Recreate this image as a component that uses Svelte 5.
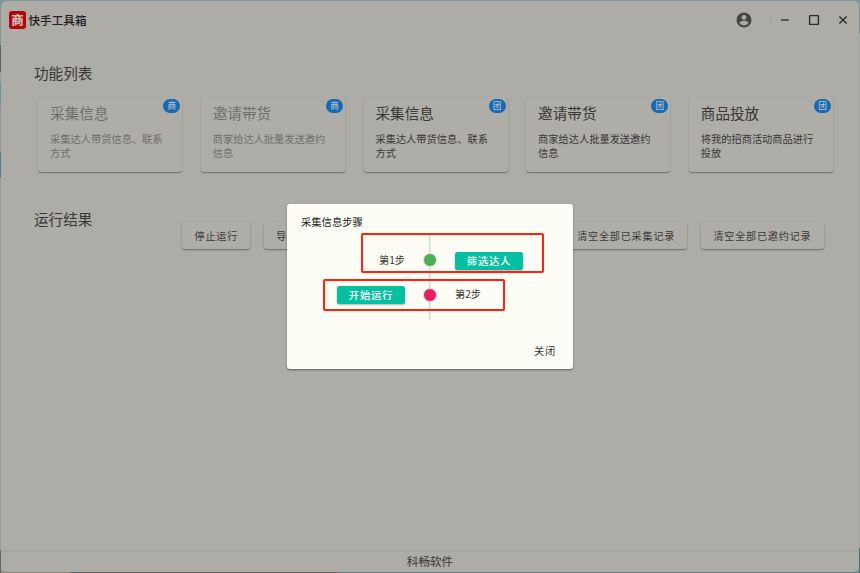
<script lang="ts">
	interface Feature {
		title: string
		desc: string
		tag: string
		disabled?: boolean
	}

	const features: Array<Feature> = [
		{ title: '采集信息', desc: '采集达人带货信息、联系方式', tag: '商', disabled: true },
		{ title: '邀请带货', desc: '商家给达人批量发送邀约信息', tag: '商', disabled: true },
		{ title: '采集信息', desc: '采集达人带货信息、联系方式', tag: '团' },
		{ title: '邀请带货', desc: '商家给达人批量发送邀约信息', tag: '团' },
		{ title: '商品投放', desc: '将我的招商活动商品进行投放', tag: '团' }
	]
</script>

<div class="desktop">
	<div class="window">
		<header>
			<span class="logo">商</span>
			<span class="name">快手工具箱</span>
			<svg class="account" viewBox="0 0 24 24">
				<path
					fill-rule="evenodd"
					d="M12 2a10 10 0 1 0 0 20 10 10 0 0 0 0-20Zm0 3.2a3.3 3.3 0 1 1 0 6.6 3.3 3.3 0 0 1 0-6.6Zm0 14.2a7.2 7.2 0 0 1-6-3.3c0-2 4-3 6-3s6 1 6 3a7.2 7.2 0 0 1-6 3.3Z"
				/>
			</svg>
			<span class="divider"></span>
			<svg class="control" viewBox="0 0 12 12"><path d="M2.2 6h7.6" /></svg>
			<svg class="control" viewBox="0 0 12 12"><rect x="1.6" y="1.6" width="8.8" height="8.8" rx="0.5" /></svg>
			<svg class="control" viewBox="0 0 12 12"><path d="M2.4 2.4l7.2 7.2M9.6 2.4l-7.2 7.2" /></svg>
		</header>

		<main>
			<h2>功能列表</h2>
			<div class="cards">
				{#each features as feature}
					<div class="card" class:disabled={feature.disabled}>
						<span class="tag">{feature.tag}</span>
						<h3>{feature.title}</h3>
						<p>{feature.desc}</p>
					</div>
				{/each}
			</div>

			<section class="results">
				<h2>运行结果</h2>
				<div class="actions">
					<button class="stop">停止运行</button>
					<button class="export">导出</button>
					<button class="clear">清空全部已采集记录</button>
					<button class="clear">清空全部已邀约记录</button>
				</div>
			</section>
		</main>

		<footer>科畅软件</footer>
	</div>

	<div class="dialog">
		<h4>采集信息步骤</h4>
		<div class="timeline">
			<div class="step first">
				<span class="side before">第1步</span>
				<i class="dot green"></i>
				<span class="side"><button class="primary">筛选达人</button></span>
				<div class="mark"></div>
			</div>
			<div class="step second">
				<span class="side before"><button class="primary">开始运行</button></span>
				<i class="dot pink"></i>
				<span class="side">第2步</span>
				<div class="mark"></div>
			</div>
		</div>
		<button class="close">关闭</button>
	</div>
</div>

<style>
	:global(body) {
		margin: 0;
	}

	.desktop,
	.desktop * {
		box-sizing: border-box;
	}

	.desktop {
		position: relative;
		width: 860px;
		height: 573px;
		padding: 1px;
		overflow: hidden;
		font-family: 'Noto Sans CJK SC', sans-serif;
		color: #373735;
		background:
			linear-gradient(#7f9499 0 45px, #66605f 45px 72px, #9aa09f 72px 82px, #6594a0 82px 106px, #9b9696 106px 152px, #567e91 152px 178px, #9a9b98 178px 550px, #656762 550px) left / 1px 100% no-repeat,
			linear-gradient(#7197a1 0 34px, #a5a8a4 34px 548px, #39777c 548px) right / 1px 100% no-repeat,
			linear-gradient(90deg, #8c8771 0 70px, #66696c 70px 340px, #5d7e7e 340px) bottom / 100% 1px no-repeat,
			#7e989d;
	}

	.window {
		display: flex;
		flex-direction: column;
		height: 571px;
		border-radius: 5px;
		background: #adaca6;
	}

	header {
		display: flex;
		align-items: center;
		height: 38px;
		padding: 0 10px 0 8px;
	}

	.logo {
		width: 17px;
		height: 18px;
		border-radius: 3px;
		background: #b3060c;
		color: #cbb9b4;
		font-size: 12.5px;
		font-weight: 900;
		line-height: 17px;
		text-align: center;
	}

	.name {
		margin: -1px 0 0 2.5px;
		font-size: 11.6px;
		font-weight: 500;
		color: #20201f;
	}

	.account {
		width: 18px;
		height: 18px;
		margin-left: auto;
		fill: #454543;
	}

	.divider {
		width: 1px;
		height: 12px;
		margin: 0 8px 0 17px;
		background: #a09f9a;
	}

	.control {
		width: 12px;
		height: 12px;
		margin-right: 17px;
		fill: none;
		stroke: #2d2d2b;
		stroke-width: 1.4;
	}

	.control:last-child {
		margin-right: 0;
	}

	main {
		flex: 1;
		padding: 24px 26px 0 33px;
	}

	h2,
	h3,
	h4,
	p {
		margin: 0;
		font-weight: 400;
	}

	h2 {
		font-size: 14.6px;
		line-height: 20px;
	}

	.cards {
		display: flex;
		gap: 18.7px;
		margin: 14px 0 0 4.3px;
	}

	.card {
		position: relative;
		flex: 1;
		height: 75px;
		padding: 6px 12px 0 11.8px;
		border-radius: 3px;
		background: #aeada7;
		box-shadow:
			0 1px 1px rgba(0, 0, 0, 0.24),
			0 1px 2px rgba(0, 0, 0, 0.14);
	}

	.card h3 {
		font-size: 14.6px;
		line-height: 20px;
	}

	.card p {
		width: 116px;
		margin-top: 8.5px;
		font-size: 10.22px;
		line-height: 14.4px;
	}

	.disabled {
		color: #6f6e6b;
	}

	.tag {
		position: absolute;
		top: 2px;
		right: 2px;
		width: 17px;
		height: 14px;
		border-radius: 7px;
		background: #1669b2;
		color: #b3bfc6;
		font-size: 8.6px;
		font-weight: 500;
		line-height: 13px;
		text-align: center;
	}

	.results {
		display: flex;
		align-items: flex-start;
		margin-top: 37px;
	}

	.actions {
		display: flex;
		gap: 13.7px;
		width: 641.5px;
		margin: 13px 9.5px 0 auto;
	}

	button {
		border: 0;
		padding: 0;
		font: inherit;
		color: inherit;
		white-space: nowrap;
	}

	.actions button {
		height: 26.5px;
		padding: 0 0 0 12.5px;
		border-radius: 3px;
		background: #aeada7;
		font-size: 10.1px;
		letter-spacing: 0.8px;
		text-align: left;
		box-shadow:
			0 1px 2px rgba(0, 0, 0, 0.32),
			0 1px 1px rgba(0, 0, 0, 0.08);
	}

	.actions .stop {
		width: 68px;
	}

	.actions .export {
		flex: 1;
	}

	.actions .clear {
		width: 122.6px;
	}

	footer {
		height: 22px;
		border-top: 2px solid #a5a49f;
		font-size: 11.6px;
		line-height: 18px;
		text-align: center;
	}

	.dialog {
		position: absolute;
		top: 204px;
		left: 287px;
		display: flex;
		flex-direction: column;
		width: 286px;
		height: 165px;
		padding: 10px 14px;
		border-radius: 3px;
		background: #fdfdf6;
		box-shadow: 0 1px 2px rgba(0, 0, 0, 0.45);
	}

	h4 {
		height: 21px;
		color: #222;
		font-size: 10.3px;
		line-height: 16px;
	}

	.timeline {
		height: 86px;
		padding-top: 8px;
		background: linear-gradient(#d8d8d3, #d8d8d3) 128px 0 / 1.5px 100% no-repeat;
	}

	.step {
		position: relative;
		display: grid;
		grid-template-columns: 1fr 14px 1fr;
		column-gap: 18px;
		align-items: center;
		height: 34.5px;
		font-size: 10.2px;
	}

	.side {
		padding-bottom: 2px;
	}

	.side:has(.primary) {
		padding: 1px 0 0;
	}

	.before {
		text-align: right;
	}

	.dot {
		width: 14px;
		height: 14px;
		border: 1.5px solid #e4e5df;
		border-radius: 50%;
	}

	.green {
		background: #4caf50;
	}

	.pink {
		background: #e91e63;
	}

	.primary {
		display: inline-block;
		width: 68px;
		height: 18px;
		border-radius: 2.5px;
		background: #04bfa2;
		color: #fff;
		font-size: 10.3px;
		font-weight: 500;
		letter-spacing: 0.8px;
		line-height: 18px;
		vertical-align: middle;
		box-shadow: 0 1px 2px rgba(0, 0, 0, 0.3);
	}

	/* red outlines calling attention to each step */
	.mark {
		position: absolute;
		border: 2px solid #ff2010;
		border-radius: 2px;
		pointer-events: none;
	}

	.first .mark {
		top: -10px;
		left: 60px;
		width: 183px;
		height: 40px;
	}

	.second .mark {
		top: 1.5px;
		left: 22px;
		width: 182px;
		height: 32px;
	}

	.close {
		align-self: flex-end;
		margin: 23px 3px 0 0;
		background: none;
		font-size: 10.2px;
		letter-spacing: 0.8px;
		line-height: 16px;
	}
</style>
